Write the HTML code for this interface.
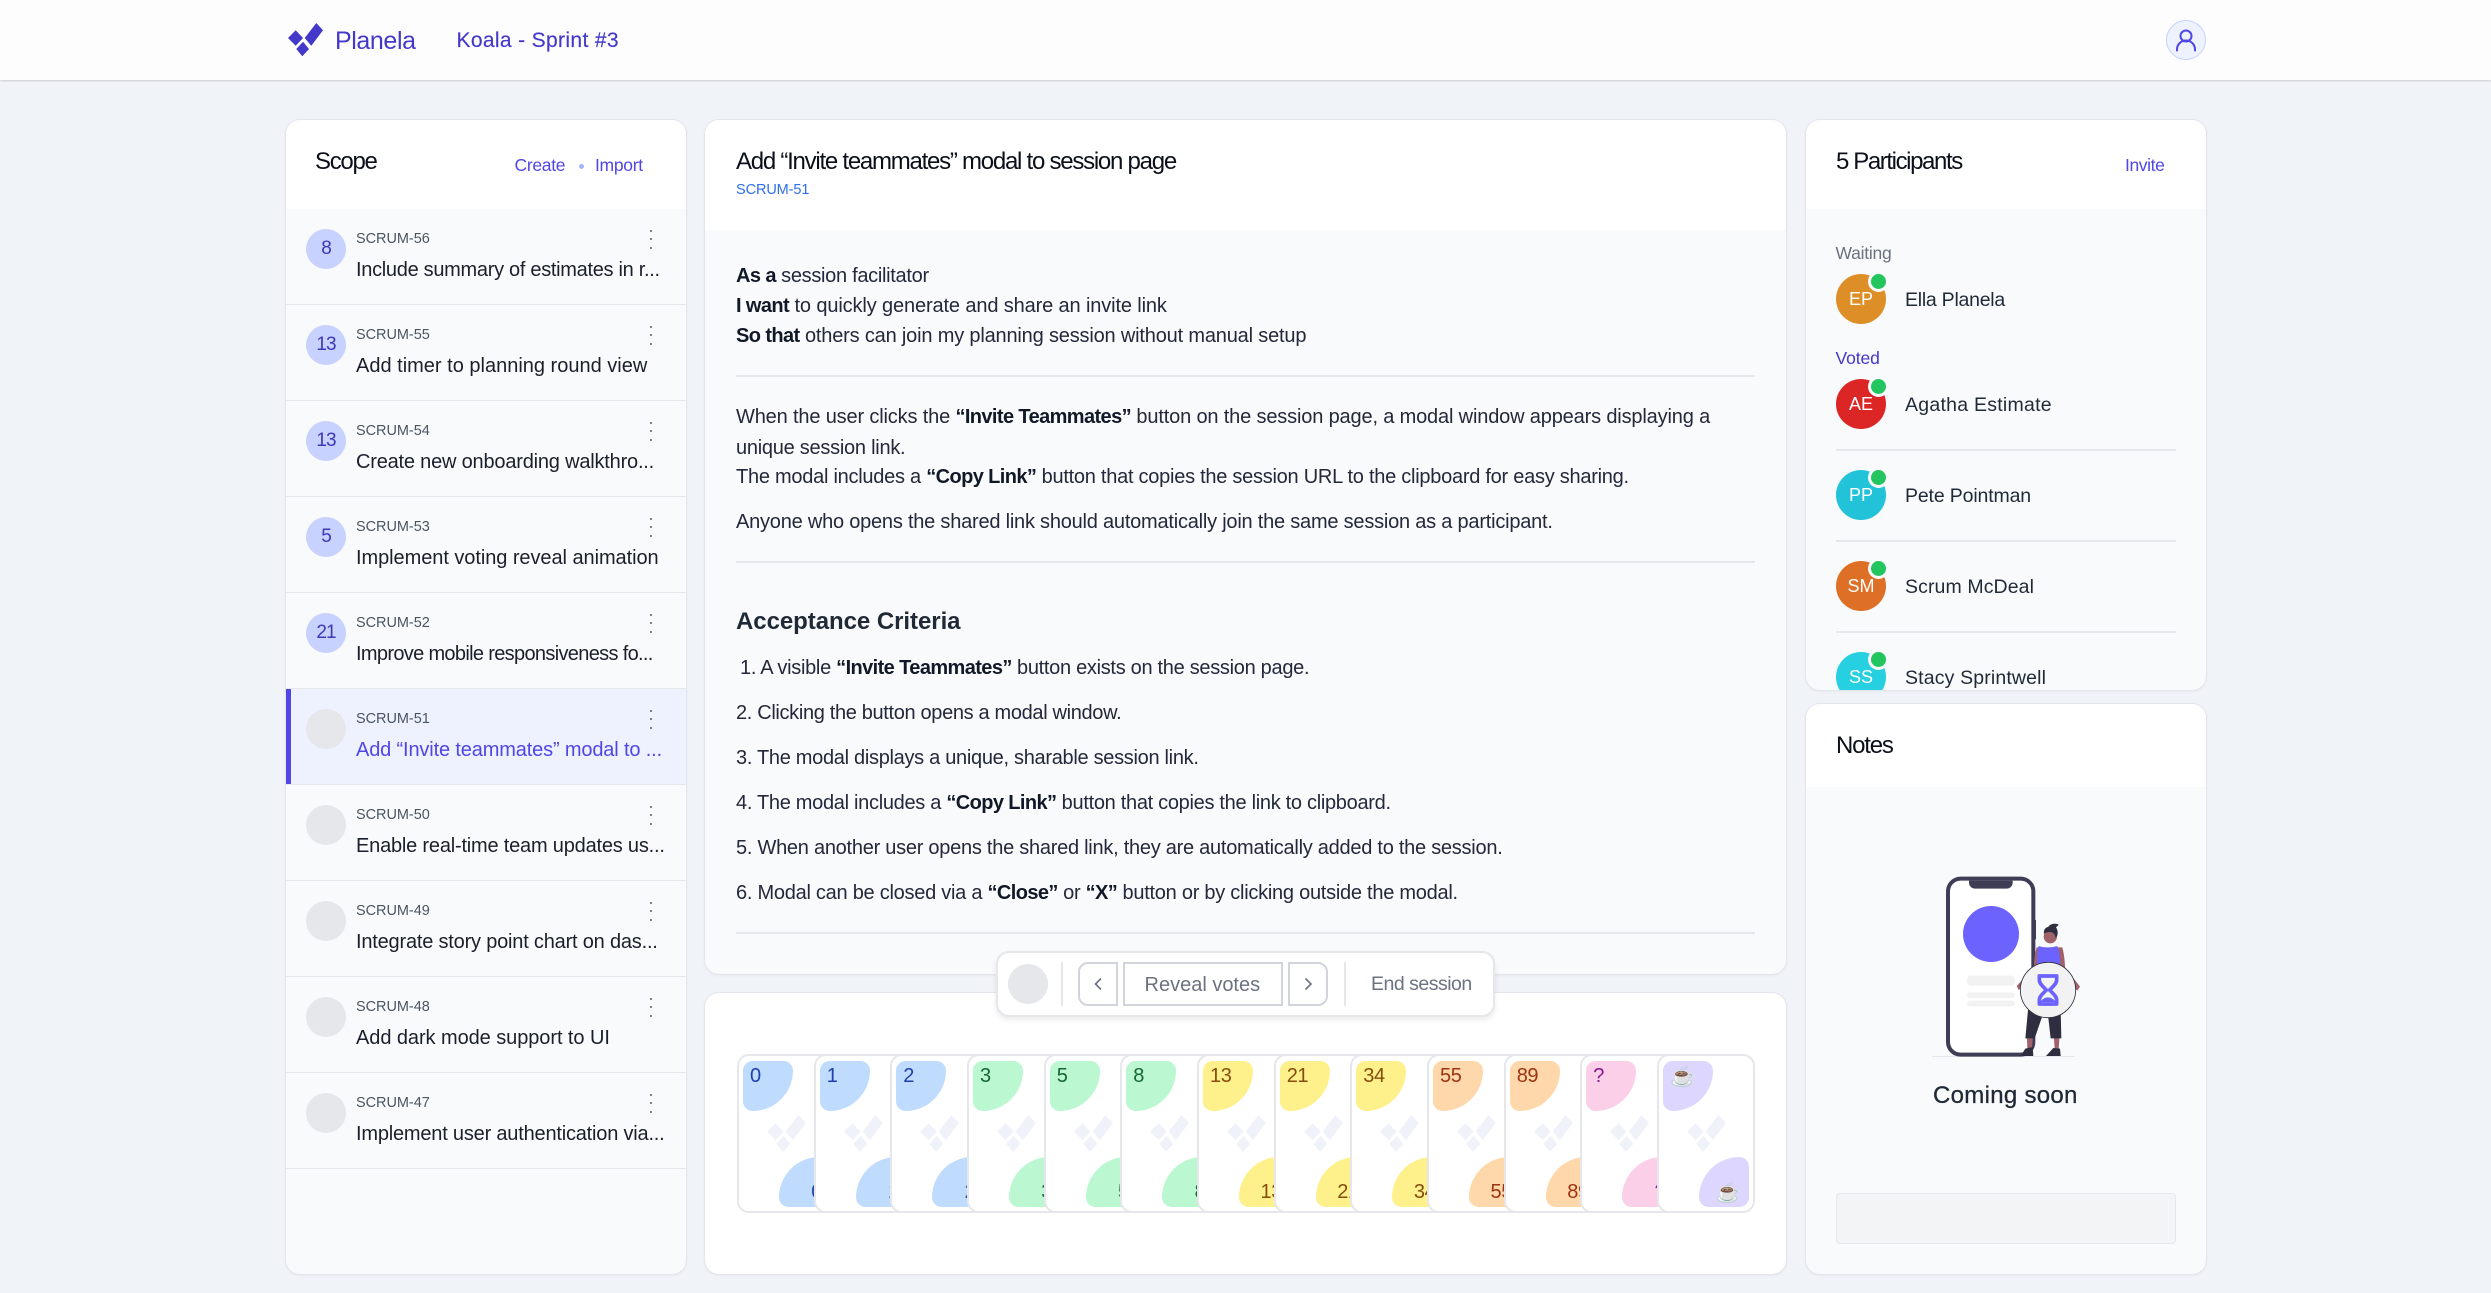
<!DOCTYPE html>
<html lang="en"><head><meta charset="utf-8"><title>Planela</title>
<style>
html,body{margin:0;padding:0}
body{position:relative;width:2491px;height:1293px;overflow:hidden;background:#f0f3f8;font-family:"Liberation Sans",sans-serif;color:#111827}
.t{position:absolute;white-space:nowrap;line-height:0}
.card{position:absolute;background:#f9fafb;border-radius:14px;overflow:hidden;box-shadow:0 0 0 1px #e3e6ec,0 1px 3px rgba(0,0,0,.08)}
.hd{position:absolute;left:0;top:0;width:100%;background:#fff}
.h2{font-size:24px;letter-spacing:-1.3px;color:#0b0f19}
.lnk{font-size:17.5px;color:#4f46e5;letter-spacing:-.3px}
.item{position:absolute;left:0;width:400px;height:96px;box-sizing:border-box;border-bottom:1.5px solid #e5e7eb}
.item .c{position:absolute;left:20px;top:20px;width:40px;height:40px;border-radius:50%;background:#e5e7eb}
.item .c.s{background:#c7d2fe;color:#3f37b5;font-size:19px;letter-spacing:-1px;text-align:center;line-height:40px}
.item .k{left:70px;top:30px;font-size:14.5px;color:#4b5563;letter-spacing:-.05px}
.item .n{left:70px;top:61px;font-size:20px;color:#1a1f2c;letter-spacing:-.3px}
.item i{position:absolute;left:363.75px;width:2.5px;height:2.5px;border-radius:50%;background:#555c69}
.item.a{background:#eef2ff;box-shadow:inset 5px 0 0 #4f46e5}
.item.a .n{color:#4f46e5}
.b{font-size:20px;left:31px;color:#23283a;letter-spacing:-.26px}
.b b{color:#111827;letter-spacing:-.6px}
.hr{position:absolute;height:1.5px;background:#e5e7eb}
.tbtn{position:absolute;top:962px;height:44px;box-sizing:border-box;border:2.5px solid #d1d5db;background:#fff}
.pc{position:absolute;top:61px;width:98px;height:159px;box-sizing:border-box;border:2px solid #e5e7eb;border-radius:12px;background:#fff;overflow:hidden}
.pc .tl,.pc .br{position:absolute;width:50px;height:50px}
.pc .tl{left:4px;top:5px;border-radius:10px 10px 42px 10px}
.pc .br{left:40px;top:101px;border-radius:42px 10px 10px 10px}
.pc span{position:absolute;white-space:nowrap;line-height:0;font-size:20px;letter-spacing:-.4px}
.pc .x{left:11px;top:20px}
.pc .y{right:11px;top:136px}
.pc svg{position:absolute;left:28px;top:59px}
.av{position:absolute;left:30px;width:50px;height:50px;border-radius:50%;color:#fff;font-size:18px;text-align:center;line-height:50px}
.av::after{content:"";position:absolute;left:32px;top:-3px;width:15px;height:15px;border-radius:50%;background:#22c55e;border:3px solid #f9fafb}
.nm{left:99px;font-size:19.5px;color:#1f2937;letter-spacing:-.15px}
</style></head><body>

<svg width="0" height="0" style="position:absolute"><defs><g id="lg"><path d="M0 15 7.7 7.3 15 15 7.7 22.7ZM8.3 26 15 18.7 21 26 14.3 33.3ZM16.7 15 28.3 0 35 7.3 23.3 22.7Z"/></g></defs></svg>

<div style="position:absolute;left:0;top:0;width:2491px;height:80px;background:#fdfdfe;box-shadow:0 1px 2px rgba(0,0,0,.16)"></div>
<svg style="position:absolute;left:288px;top:23px" width="36" height="34" fill="#4338ca"><use href="#lg"/></svg>
<div class="t" style="left:335px;top:41px;font-size:25px;color:#4338ca;letter-spacing:-.4px">Planela</div>
<div class="t" style="left:456.5px;top:41px;font-size:21px;color:#4338ca;letter-spacing:.35px;-webkit-text-stroke:.15px #4338ca">Koala - Sprint #3</div>
<div style="position:absolute;left:2166px;top:20px;width:38px;height:38px;border:1px solid #c7d2fe;border-radius:50%;background:#eef2ff"></div>
<svg style="position:absolute;left:2166px;top:20px" width="40" height="40" fill="none" stroke="#4f46e5" stroke-width="2"><circle cx="20" cy="16" r="5.5"/><path d="M11 30.500v-1c0-5 4-9 9-9s9 4 9 9v1" stroke-linecap="round"/></svg>

<!-- Scope -->
<div class="card" style="left:286px;top:120px;width:400px;height:1154px">
 <div class="hd" style="height:89px"></div>
 <div class="t h2" style="left:29px;top:42px">Scope</div>
 <div class="t lnk" style="left:228.500px;top:45px">Create</div>
 <div style="position:absolute;left:293px;top:43.5px;width:5px;height:5px;border-radius:50%;background:#a5b4fc"></div>
 <div class="t lnk" style="left:309px;top:45px">Import</div>

 <div class="item" style="top:89px"><div class="c s">8</div><div class="t k">SCRUM-56</div><i style="top:20.5px"></i><i style="top:28.75px"></i><i style="top:37.5px"></i><div class="t n">Include summary of estimates in r...</div></div>
 <div class="item" style="top:185px"><div class="c s">13</div><div class="t k">SCRUM-55</div><i style="top:20.5px"></i><i style="top:28.75px"></i><i style="top:37.5px"></i><div class="t n" style="letter-spacing:0">Add timer to planning round view</div></div>
 <div class="item" style="top:281px"><div class="c s">13</div><div class="t k">SCRUM-54</div><i style="top:20.5px"></i><i style="top:28.75px"></i><i style="top:37.5px"></i><div class="t n" style="letter-spacing:-.2px">Create new onboarding walkthro...</div></div>
 <div class="item" style="top:377px"><div class="c s">5</div><div class="t k">SCRUM-53</div><i style="top:20.5px"></i><i style="top:28.75px"></i><i style="top:37.5px"></i><div class="t n" style="letter-spacing:-.06px">Implement voting reveal animation</div></div>
 <div class="item" style="top:473px"><div class="c s">21</div><div class="t k">SCRUM-52</div><i style="top:20.5px"></i><i style="top:28.75px"></i><i style="top:37.5px"></i><div class="t n" style="letter-spacing:-.67px">Improve mobile responsiveness fo...</div></div>
 <div class="item a" style="top:569px"><div class="c"></div><div class="t k">SCRUM-51</div><i style="top:20.5px"></i><i style="top:28.75px"></i><i style="top:37.5px"></i><div class="t n" style="letter-spacing:-.15px">Add “Invite teammates” modal to ...</div></div>
 <div class="item" style="top:665px"><div class="c"></div><div class="t k">SCRUM-50</div><i style="top:20.5px"></i><i style="top:28.75px"></i><i style="top:37.5px"></i><div class="t n" style="letter-spacing:-.2px">Enable real-time team updates us...</div></div>
 <div class="item" style="top:761px"><div class="c"></div><div class="t k">SCRUM-49</div><i style="top:20.5px"></i><i style="top:28.75px"></i><i style="top:37.5px"></i><div class="t n" style="letter-spacing:-.2px">Integrate story point chart on das...</div></div>
 <div class="item" style="top:857px"><div class="c"></div><div class="t k">SCRUM-48</div><i style="top:20.5px"></i><i style="top:28.75px"></i><i style="top:37.5px"></i><div class="t n" style="letter-spacing:-.07px">Add dark mode support to UI</div></div>
 <div class="item" style="top:953px"><div class="c"></div><div class="t k">SCRUM-47</div><i style="top:20.5px"></i><i style="top:28.75px"></i><i style="top:37.5px"></i><div class="t n" style="letter-spacing:-.2px">Implement user authentication via...</div></div>
</div>

<!-- Main -->
<div class="card" style="left:705px;top:120px;width:1081px;height:854px">
 <div class="hd" style="height:110px"></div>
 <div class="t h2" style="left:31px;top:42px;letter-spacing:-1.25px">Add “Invite teammates” modal to session page</div>
 <div class="t" style="left:31px;top:70px;font-size:14.5px;color:#2f6fed;letter-spacing:-.1px">SCRUM-51</div>
 <div class="t b" style="top:156px;letter-spacing:-.3px"><b>As a</b> session facilitator</div>
 <div class="t b" style="top:186px;letter-spacing:-.13px"><b>I want</b> to quickly generate and share an invite link</div>
 <div class="t b" style="top:216px;letter-spacing:-.18px"><b>So that</b> others can join my planning session without manual setup</div>
 <div class="hr" style="left:31px;top:255px;width:1019px"></div>
 <div class="t b" style="top:297px;letter-spacing:-.16px">When the user clicks the <b>“Invite Teammates”</b> button on the session page, a modal window appears displaying a</div>
 <div class="t b" style="top:328px">unique session link.</div>
 <div class="t b" style="top:357px">The modal includes a <b>“Copy Link”</b> button that copies the session URL to the clipboard for easy sharing.</div>
 <div class="t b" style="top:402px;letter-spacing:-.22px">Anyone who opens the shared link should automatically join the same session as a participant.</div>
 <div class="hr" style="left:31px;top:441px;width:1019px"></div>
 <div class="t" style="left:31px;top:502px;font-size:24px;font-weight:700;color:#1f2937;letter-spacing:-.05px">Acceptance Criteria</div>
 <div class="t b" style="top:548px;left:35px;letter-spacing:-.3px">1. A visible <b>“Invite Teammates”</b> button exists on the session page.</div>
 <div class="t b" style="top:593px;letter-spacing:-.34px">2. Clicking the button opens a modal window.</div>
 <div class="t b" style="top:638px;letter-spacing:-.3px">3. The modal displays a unique, sharable session link.</div>
 <div class="t b" style="top:683px;letter-spacing:-.3px">4. The modal includes a <b>“Copy Link”</b> button that copies the link to clipboard.</div>
 <div class="t b" style="top:728px">5. When another user opens the shared link, they are automatically added to the session.</div>
 <div class="t b" style="top:773px">6. Modal can be closed via a <b>“Close”</b> or <b>“X”</b> button or by clicking outside the modal.</div>
 <div class="hr" style="left:31px;top:812px;width:1019px"></div>
</div>

<!-- Cards panel -->
<div class="card" style="left:705px;top:993px;width:1081px;height:281px;background:#fff">
 <div class="pc" style="left:32px"><div class="tl" style="background:#bfdbfe"></div><div class="br" style="background:#bfdbfe"></div><svg width="39" height="37" viewBox="0 0 35 33.3" fill="#eff3f9"><use href="#lg"/></svg><span class="x" style="color:#1e40af">0</span><span class="y" style="color:#1e40af">0</span></div>
 <div class="pc" style="left:108.7px"><div class="tl" style="background:#bfdbfe"></div><div class="br" style="background:#bfdbfe"></div><svg width="39" height="37" viewBox="0 0 35 33.3" fill="#eff3f9"><use href="#lg"/></svg><span class="x" style="color:#1e40af">1</span><span class="y" style="color:#1e40af">1</span></div>
 <div class="pc" style="left:185.3px"><div class="tl" style="background:#bfdbfe"></div><div class="br" style="background:#bfdbfe"></div><svg width="39" height="37" viewBox="0 0 35 33.3" fill="#eff3f9"><use href="#lg"/></svg><span class="x" style="color:#1e40af">2</span><span class="y" style="color:#1e40af">2</span></div>
 <div class="pc" style="left:262px"><div class="tl" style="background:#bbf7d0"></div><div class="br" style="background:#bbf7d0"></div><svg width="39" height="37" viewBox="0 0 35 33.3" fill="#eff3f9"><use href="#lg"/></svg><span class="x" style="color:#166534">3</span><span class="y" style="color:#166534">3</span></div>
 <div class="pc" style="left:338.7px"><div class="tl" style="background:#bbf7d0"></div><div class="br" style="background:#bbf7d0"></div><svg width="39" height="37" viewBox="0 0 35 33.3" fill="#eff3f9"><use href="#lg"/></svg><span class="x" style="color:#166534">5</span><span class="y" style="color:#166534">5</span></div>
 <div class="pc" style="left:415.3px"><div class="tl" style="background:#bbf7d0"></div><div class="br" style="background:#bbf7d0"></div><svg width="39" height="37" viewBox="0 0 35 33.3" fill="#eff3f9"><use href="#lg"/></svg><span class="x" style="color:#166534">8</span><span class="y" style="color:#166534">8</span></div>
 <div class="pc" style="left:492px"><div class="tl" style="background:#fef08a"></div><div class="br" style="background:#fef08a"></div><svg width="39" height="37" viewBox="0 0 35 33.3" fill="#eff3f9"><use href="#lg"/></svg><span class="x" style="color:#854d0e">13</span><span class="y" style="color:#854d0e">13</span></div>
 <div class="pc" style="left:568.7px"><div class="tl" style="background:#fef08a"></div><div class="br" style="background:#fef08a"></div><svg width="39" height="37" viewBox="0 0 35 33.3" fill="#eff3f9"><use href="#lg"/></svg><span class="x" style="color:#854d0e">21</span><span class="y" style="color:#854d0e">21</span></div>
 <div class="pc" style="left:645.3px"><div class="tl" style="background:#fef08a"></div><div class="br" style="background:#fef08a"></div><svg width="39" height="37" viewBox="0 0 35 33.3" fill="#eff3f9"><use href="#lg"/></svg><span class="x" style="color:#854d0e">34</span><span class="y" style="color:#854d0e">34</span></div>
 <div class="pc" style="left:722px"><div class="tl" style="background:#fed7aa"></div><div class="br" style="background:#fed7aa"></div><svg width="39" height="37" viewBox="0 0 35 33.3" fill="#eff3f9"><use href="#lg"/></svg><span class="x" style="color:#9a3412">55</span><span class="y" style="color:#9a3412">55</span></div>
 <div class="pc" style="left:798.7px"><div class="tl" style="background:#fed7aa"></div><div class="br" style="background:#fed7aa"></div><svg width="39" height="37" viewBox="0 0 35 33.3" fill="#eff3f9"><use href="#lg"/></svg><span class="x" style="color:#9a3412">89</span><span class="y" style="color:#9a3412">89</span></div>
 <div class="pc" style="left:875.3px"><div class="tl" style="background:#fbcfe8"></div><div class="br" style="background:#fbcfe8"></div><svg width="39" height="37" viewBox="0 0 35 33.3" fill="#eff3f9"><use href="#lg"/></svg><span class="x" style="color:#86198f">?</span><span class="y" style="color:#86198f">?</span></div>
 <div class="pc" style="left:952px"><div class="tl" style="background:#ddd6fe"></div><div class="br" style="background:#ddd6fe"></div><svg width="39" height="37" viewBox="0 0 35 33.3" fill="#eff3f9"><use href="#lg"/></svg><span class="x" style="font-family:'Noto Color Emoji','Liberation Sans',sans-serif">☕</span><span class="y" style="right:13px;font-family:'Noto Color Emoji','Liberation Sans',sans-serif">☕</span></div>
</div>

<!-- Toolbar -->
<div style="position:absolute;left:996px;top:951px;width:499px;height:66px;box-sizing:border-box;background:#fff;border:2px solid #e5e7eb;border-radius:13px;box-shadow:0 3px 6px rgba(0,0,0,.08)"></div>
<div style="position:absolute;left:1007.5px;top:964px;width:40px;height:40px;border-radius:50%;background:#e5e7eb"></div>
<div style="position:absolute;left:1061px;top:962px;width:1.5px;height:44px;background:#e5e7eb"></div>
<div class="tbtn" style="left:1078px;width:40px;border-radius:10px 0 0 10px"></div>
<svg style="position:absolute;left:1078px;top:962px" width="40" height="44" fill="none" stroke="#6b7280" stroke-width="1.6"><path d="M23 16.500 17.500 22l5.500 5.500"/></svg>
<div class="tbtn" style="left:1123px;width:160px"></div>
<div class="t" style="left:1144.5px;top:985px;font-size:20px;color:#6b7280">Reveal votes</div>
<div class="tbtn" style="left:1288px;width:40px;border-radius:0 10px 10px 0"></div>
<svg style="position:absolute;left:1288px;top:962px" width="40" height="44" fill="none" stroke="#6b7280" stroke-width="1.6"><path d="M17.500 16.500 23 22l-5.500 5.500"/></svg>
<div style="position:absolute;left:1344px;top:962px;width:1.5px;height:44px;background:#e5e7eb"></div>
<div class="t" style="left:1371px;top:984px;font-size:19.5px;color:#6b7280;letter-spacing:-.5px">End session</div>

<!-- Participants -->
<div class="card" style="left:1806px;top:120px;width:400px;height:570px">
 <div class="hd" style="height:89px"></div>
 <div class="t h2" style="left:30px;top:42px;letter-spacing:-1.4px">5 Participants</div>
 <div class="t lnk" style="left:319px;top:45px;letter-spacing:-.4px">Invite</div>
 <div class="t" style="left:29.5px;top:132.5px;font-size:17.500px;color:#6b7280;letter-spacing:-.25px">Waiting</div>
 <div class="av" style="top:154px;background:#dd8e27">EP</div>
 <div class="t nm" style="top:180px;letter-spacing:-.25px">Ella Planela</div>
 <div class="t" style="left:29.5px;top:237.5px;font-size:17.500px;color:#4338ca;letter-spacing:-.1px">Voted</div>
 <div class="av" style="top:259px;background:#dc2626">AE</div>
 <div class="t nm" style="top:285px;letter-spacing:.25px">Agatha Estimate</div>
 <div class="hr" style="left:30px;top:329px;width:340px"></div>
 <div class="av" style="top:350px;background:#22c3d9">PP</div>
 <div class="t nm" style="top:376px">Pete Pointman</div>
 <div class="hr" style="left:30px;top:420px;width:340px"></div>
 <div class="av" style="top:441px;background:#dd6f26">SM</div>
 <div class="t nm" style="top:467px;letter-spacing:.1px">Scrum McDeal</div>
 <div class="hr" style="left:30px;top:511px;width:340px"></div>
 <div class="av" style="top:532px;background:#26d0e0">SS</div>
 <div class="t nm" style="top:558px;letter-spacing:.15px">Stacy Sprintwell</div>
</div>

<!-- Notes -->
<div class="card" style="left:1806px;top:704px;width:400px;height:570px">
 <div class="hd" style="height:83px"></div>
 <div class="t h2" style="left:30px;top:42px;letter-spacing:-1.2px">Notes</div>
 <div class="t" style="left:127px;top:392px;font-size:24px;color:#1f2937;letter-spacing:.3px;-webkit-text-stroke:.3px #1f2937">Coming soon</div>
 <div style="position:absolute;left:30px;top:489px;width:340px;height:51px;box-sizing:border-box;background:#f3f4f6;border:1px solid #e5e7eb;border-radius:4px"></div>
</div>
<svg style="position:absolute;left:1900px;top:850px" width="240" height="280" viewBox="0 0 720 840">
 <rect x="96" y="618" width="428" height="3" fill="#e4e6ea"/>
 <rect x="404" y="210" width="4" height="58" fill="#3f3d56"/>
 <rect x="144" y="86" width="256" height="528" rx="38" fill="#fff" stroke="#3f3d56" stroke-width="12"/>
 <path d="M207 92h131v6c0 10-8 18-18 18H225c-10 0-18-8-18-18Z" fill="#3f3d56"/>
 <circle cx="273" cy="252" r="84" fill="#6c63ff"/>
 <rect x="201" y="377" width="144" height="30" rx="12" fill="#f2f2f2"/>
 <rect x="201" y="427" width="144" height="17" rx="8" fill="#f2f2f2"/>
 <rect x="201" y="452" width="144" height="17" rx="8" fill="#f2f2f2"/>
 <path d="M380 540h20l-4 55h-14ZM460 540h20l-4 56h-12Z" fill="#a0616a"/>
 <path d="M384 480h98l2 85h-32l-8-70h-16l-24 70h-28Z" fill="#2f2e41"/>
 <path d="M362 618l14-22 22-5 2 27ZM438 618l22-24 20 2 2 22Z" fill="#2f2e41"/>
 <path d="M410 292c-6 20-8 40-8 60l-52 56 6 12 50-40h76l50 42 8-12-45-58c0-20-4-45-8-60Z" fill="#a0616a"/>
 <path d="M416 288c18 6 36 6 56 0 8 20 10 50 8 80h-68c-2-30-2-60 4-80Z" fill="#6c63ff"/>
 <circle cx="451" cy="260" r="20" fill="#a0616a"/>
 <path d="M432 252c-2-14 6-20 14-22 2-8 20-12 30-6-2 4-6 6-8 8 6 8 8 24-1 32-2-12-8-18-18-18-6 0-14 2-17 6Z" fill="#2f2e41"/>
 <circle cx="444" cy="420" r="83" fill="#f2f2f2" stroke="#2f2e41" stroke-width="2.500"/>
 <path d="M418 378h52v12c0 12-14 22-21 30 7 8 21 18 21 30v12h-52v-12c0-12 14-22 21-30-7-8-21-18-21-30Z" fill="none" stroke="#6c63ff" stroke-width="11" stroke-linejoin="round"/>
 <path d="M420 456c8-10 16-14 24-14s16 4 24 14Z" fill="#6c63ff"/>
</svg>
</body></html>
